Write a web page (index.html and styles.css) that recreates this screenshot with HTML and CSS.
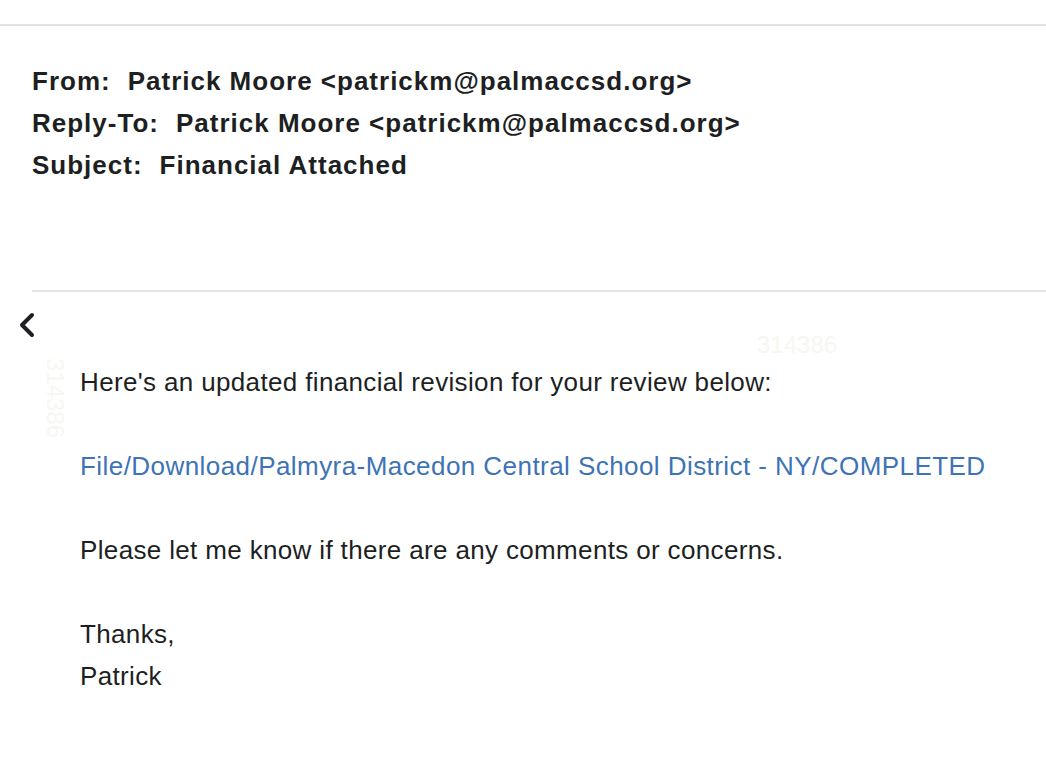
FILE: index.html
```html
<!DOCTYPE html>
<html>
<head>
<meta charset="utf-8">
<link rel="stylesheet" href="styles.css">
</head>
<body>
<div class="page">
  <div class="topbar"></div>
  <div class="headers">
    <div class="hline"><span class="lbl">From:</span>Patrick Moore &lt;patrickm@palmaccsd.org&gt;</div>
    <div class="hline"><span class="lbl">Reply-To:</span>Patrick Moore &lt;patrickm@palmaccsd.org&gt;</div>
    <div class="hline"><span class="lbl">Subject:</span>Financial Attached</div>
  </div>
  <div class="divider"></div>
  <div class="backrow">
    <svg class="chev" width="18" height="26" viewBox="0 0 18 26"><polyline points="14,3 4,13 14,23" fill="none" stroke="#1d1f23" stroke-width="4" stroke-linecap="round" stroke-linejoin="round"/></svg>
  </div>
  <div class="body">
    <p>Here's an updated financial revision for your review below:</p>
    <p><a class="link" href="#">File/Download/Palmyra-Macedon Central School District - NY/COMPLETED</a></p>
    <p>Please let me know if there are any comments or concerns.</p>
    <p>Thanks,<br>Patrick</p>
  </div>
  <div class="wm wm-h">314386</div>
  <div class="wm wm-v">314386</div>
</div>
</body>
</html>
```

FILE: styles.css
```css
html, body {
  margin: 0;
  padding: 0;
  background: #ffffff;
}
.page {
  position: relative;
  width: 1046px;
  height: 766px;
  overflow: hidden;
  font-family: "Liberation Sans", Arial, Helvetica, sans-serif;
  color: #1d1f23;
}
.topbar {
  margin-top: 24px;
  height: 2px;
  background: #dde2e6;
}
.headers {
  padding: 34px 0 0 32px;
}
.hline {
  font-size: 26px;
  font-weight: bold;
  line-height: 42px;
  height: 42px;
  white-space: nowrap;
  letter-spacing: 1px;
}
.lbl {
  margin-right: 17px;
}
.divider {
  margin: 104px 0 0 32px;
  height: 2px;
  background: #e4e6e9;
}
.backrow {
  padding: 20px 0 0 18px;
  height: 27px;
}
.chev {
  display: block;
}
.body {
  padding: 22px 0 0 80px;
  font-size: 26px;
  line-height: 42px;
  letter-spacing: 0.35px;
}
.body p {
  margin: 0 0 42px 0;
  white-space: nowrap;
}
.link {
  color: #3e73b5;
  text-decoration: none;
  letter-spacing: 0.44px;
}
.wm {
  position: absolute;
  font-size: 24px;
  color: #f7f7f2;
  font-weight: normal;
}
.wm-h {
  left: 757px;
  top: 331px;
}
.wm-v {
  left: 15px;
  top: 384px;
  transform: rotate(90deg);
  transform-origin: center;
  width: 80px;
  text-align: center;
}
```
